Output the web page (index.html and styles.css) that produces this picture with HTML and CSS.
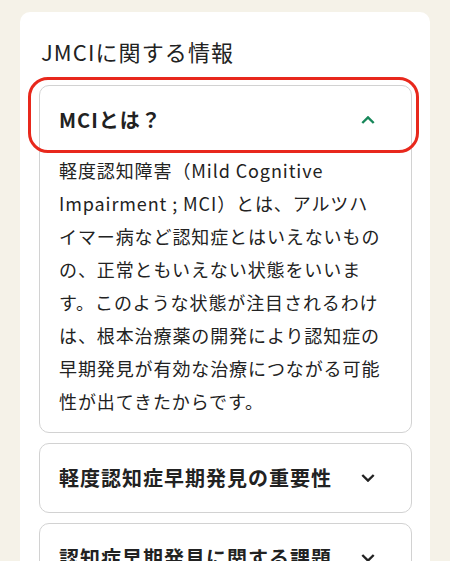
FILE: index.html
```html
<!DOCTYPE html>
<html lang="ja">
<head>
<meta charset="utf-8">
<title>JMCIに関する情報</title>
<link rel="stylesheet" href="styles.css">
</head>
<body>
<section class="card">
  <h2 class="title">JMCIに関する情報</h2>
  <div class="list">
    <div class="item open">
      <div class="mark"></div>
      <div class="head">
        <span class="q">MCIとは？</span>
        <svg class="chev up" width="14" height="8" viewBox="0 0 14 8"><polyline points="1.3,7 7,1.4 12.7,7" fill="none" stroke="currentColor" stroke-width="2.4" stroke-linecap="butt" stroke-linejoin="miter"/></svg>
      </div>
      <div class="body">軽度認知障害（Mild Cognitive Impairment ; MCI）とは、アルツハイマー病など認知症とはいえないものの、正常ともいえない状態をいいます。このような状態が注目されるわけは、根本治療薬の開発により認知症の早期発見が有効な治療につながる可能性が出てきたからです。</div>
    </div>
    <div class="item">
      <div class="head">
        <span class="q">軽度認知症早期発見の重要性</span>
        <svg class="chev" width="14" height="8" viewBox="0 0 14 8"><polyline points="1.3,1 7,6.6 12.7,1" fill="none" stroke="currentColor" stroke-width="2.4"/></svg>
      </div>
    </div>
    <div class="item">
      <div class="head">
        <span class="q">認知症早期発見に関する課題</span>
        <svg class="chev" width="14" height="8" viewBox="0 0 14 8"><polyline points="1.3,1 7,6.6 12.7,1" fill="none" stroke="currentColor" stroke-width="2.4"/></svg>
      </div>
    </div>
  </div>
</section>
</body>
</html>
```
FILE: styles.css
```css
html, body {
  margin: 0;
  padding: 0;
}
body {
  background: #f5f2e8;
  font-family: "Noto Sans CJK JP", "Noto Sans", sans-serif;
  color: #222;
  padding: 12px 20px 0 20px;
  height: 561px;
  box-sizing: border-box;
  overflow: hidden;
}
.card {
  background: #fff;
  border-radius: 10px;
  padding: 22px 18px 20px 19px;
}
.title {
  margin: 0 0 17px 2px;
  font-size: 22px;
  font-weight: 400;
  line-height: 34px;
  letter-spacing: 0.05em;
}
.list {
  display: flex;
  flex-direction: column;
  gap: 10px;
}
.item {
  position: relative;
  border: 1px solid #d2d2d2;
  border-radius: 10px;
  background: #fff;
}
.mark {
  position: absolute;
  top: -9px;
  left: -12px;
  right: -8px;
  height: 70px;
  border: 3px solid #e8281c;
  border-radius: 20px;
  pointer-events: none;
}
.head {
  display: flex;
  align-items: center;
  justify-content: space-between;
  padding: 20px 36px 20px 19px;
}
.q {
  font-size: 20px;
  font-weight: 700;
  line-height: 28px;
  letter-spacing: 0.05em;
}
.chev {
  color: #222;
  display: block;
}
.chev.up {
  color: #17875a;
}
.body {
  padding: 0 26px 14px 19px;
  font-size: 18px;
  line-height: 33px;
  letter-spacing: 0.05em;
}
```
